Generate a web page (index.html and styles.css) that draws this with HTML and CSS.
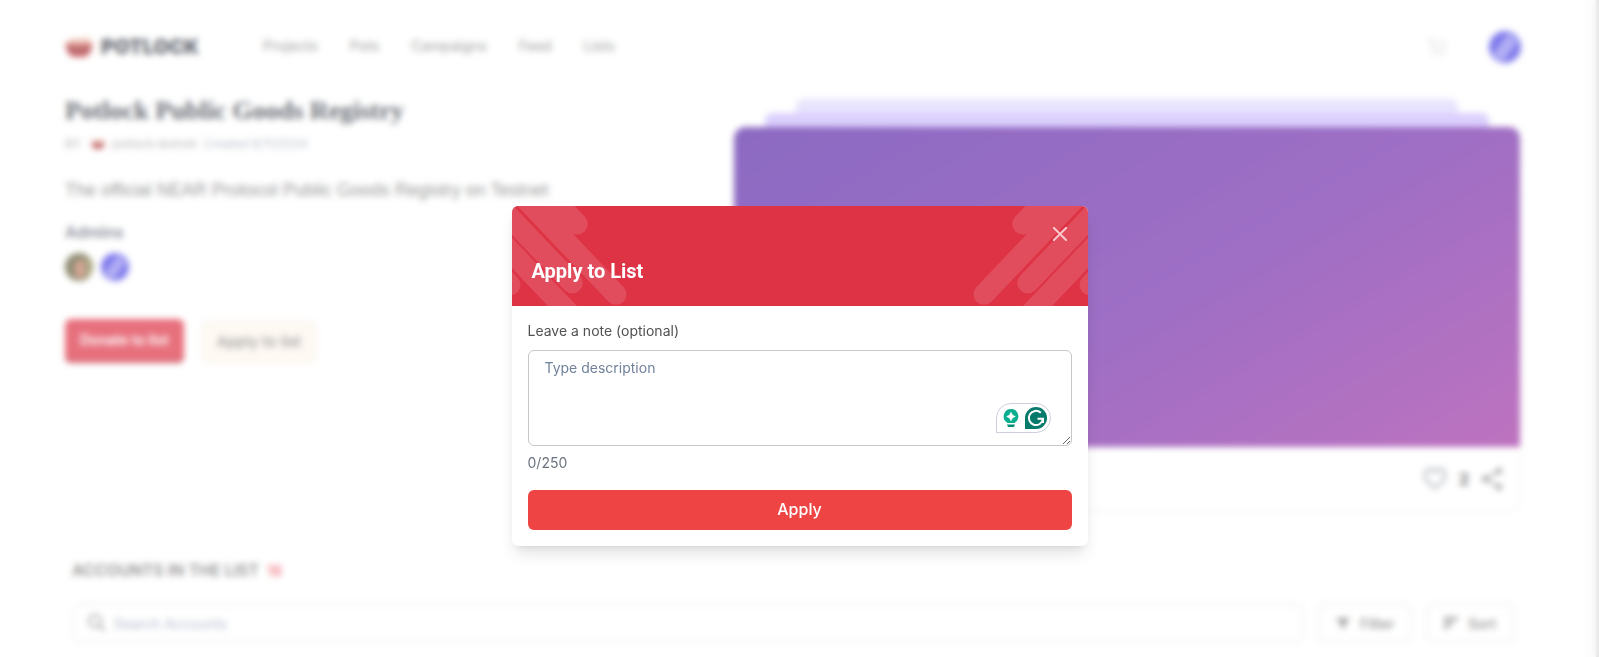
FILE: index.html
```html
<!DOCTYPE html>
<html lang="en">
<head>
<meta charset="utf-8">
<title>Potlock Public Goods Registry</title>
<link rel="stylesheet" href="styles.css">
</head>
<body>
<svg class="defs" aria-hidden="true">
  <symbol id="pot" viewBox="0 0 28 24">
    <path d="M21 5 24 0" stroke="#e8c9a8" stroke-width="2"/>
    <ellipse cx="14" cy="8" rx="13" ry="4" fill="#e2a08c"/>
    <path d="M1 8c2 3 24 3 26 0 1 8-4 14-9 14h-8C5 22 0 16 1 8z" fill="#b8242c"/>
    <path d="M4 12c4 2 16 2 20 0v3c-5 2-15 2-20 0z" fill="#7c3a36"/>
  </symbol>
  <symbol id="near" viewBox="0 0 32 32">
    <circle cx="16" cy="16" r="16" fill="#4a43e4"/>
    <path d="M6 26 22 4M11 29 27 8" stroke="#b4b0f6" stroke-width="4"/>
  </symbol>
</svg>
<div class="shell">
  <div class="page">
    <header class="topbar">
      <a class="brand" href="#"><svg class="brand-icon" aria-hidden="true"><use href="#pot"/></svg>POTLOCK</a>
      <nav class="nav">
        <a href="#">Projects</a><a href="#">Pots</a><a href="#">Campaigns</a><a href="#">Feed</a><a href="#">Lists</a>
      </nav>
      <button class="plain cart" aria-label="Cart"><svg width="20" height="20" viewBox="0 0 20 20" fill="none" stroke="#dedede" stroke-width="2"><path d="M1 2h3l2 11h10l2-8H5"/><circle cx="7" cy="17" r="1"/><circle cx="15" cy="17" r="1"/></svg></button>
      <button class="plain" aria-label="Account"><svg width="32" height="32"><use href="#near"/></svg></button>
    </header>
    <main>
      <section class="hero">
        <div class="intro">
          <h1>Potlock Public Goods Registry</h1>
          <p class="byline"><span>BY</span><svg class="by-icon" aria-hidden="true"><use href="#pot"/></svg><a href="#">potlock.testnet</a><span class="created">Created 6/11/2024</span></p>
          <p class="summary">The official NEAR Protocol Public Goods Registry on Testnet</p>
          <h2>Admins</h2>
          <div class="admins">
            <svg width="28" height="28" viewBox="0 0 28 28" aria-hidden="true"><circle cx="14" cy="14" r="14" fill="#5c5a34"/><ellipse cx="15" cy="16" rx="6" ry="10" fill="#c08068"/><path d="M21 6c5 4 5 12 1 17" stroke="#a3a05c" stroke-width="3" fill="none"/></svg>
            <svg width="28" height="28" aria-hidden="true"><use href="#near"/></svg>
          </div>
          <div class="actions">
            <button class="donate">Donate to list</button>
            <button class="apply-list">Apply to list</button>
          </div>
        </div>
        <div class="stack">
          <div class="sheet sheet-back"></div>
          <div class="sheet sheet-mid"></div>
          <div class="card">
            <div class="cover"></div>
            <div class="card-foot">
              <button class="plain" aria-label="Like"><svg width="24" height="24" viewBox="0 0 24 24" fill="none" stroke="#7f8791" stroke-width="2"><path d="M12 21C6 17 2 13 2 8.500A5 5 0 0 1 12 6a5 5 0 0 1 10 2.500C22 13 18 17 12 21z"/></svg></button>
              <span class="likes">2</span>
              <button class="plain" aria-label="Share"><svg width="22" height="24" viewBox="0 0 22 24" fill="#777" stroke="#777" stroke-width="2"><path d="M18 4 4 12l14 8" fill="none"/><circle cx="18" cy="4" r="2"/><circle cx="4" cy="12" r="2"/><circle cx="18" cy="20" r="2"/></svg></button>
            </div>
          </div>
        </div>
      </section>
      <section class="accounts">
        <h3>ACCOUNTS IN THE LIST <span>18</span></h3>
        <div class="tools">
          <label class="search"><svg width="18" height="18" viewBox="0 0 18 18" fill="none" stroke="#858585" stroke-width="2"><circle cx="7" cy="7" r="6"/><path d="m11 11 6 6"/></svg><input type="search" placeholder="Search Accounts" aria-label="Search Accounts"></label>
          <button class="tool"><svg width="14" height="12" viewBox="0 0 14 12" fill="#777"><path d="M0 1h14L9 7v4H5V7z"/></svg>Filter</button>
          <button class="tool"><svg width="14" height="12" viewBox="0 0 14 12" fill="#777"><path d="M0 0h14v3H0zM0 5h9v3H0zM0 9h4v3H0z"/></svg>Sort</button>
        </div>
      </section>
    </main>
  </div>
  <div class="track"></div>
</div>

<div class="overlay">
  <form class="modal" role="dialog" aria-labelledby="modal-title">
    <div class="modal-head">
      <svg class="stripes stripes-left" width="120" height="100" viewBox="0 0 120 100" aria-hidden="true"><path d="M65.300 18-29.800-82M104 88.300-38-61M60.300 77-72-62M98 150-60-16M-2 79-60 18"/></svg>
      <svg class="stripes stripes-right" width="120" height="100" viewBox="0 0 120 100" aria-hidden="true"><path transform="matrix(-1 0 0 1 120 0)" d="M65.300 18-29.800-82M104 88.300-38-61M60.300 77-72-62M98 150-60-16M-2 79-60 18"/></svg>
      <button type="button" class="plain close" aria-label="Close"><svg width="14" height="14" viewBox="0 0 14 14" fill="none" stroke="#f9c8cd" stroke-width="2"><path d="m0 0 14 14M14 0 0 14"/></svg></button>
      <h2 id="modal-title">Apply to List</h2>
    </div>
    <div class="modal-body">
      <label for="note">Leave a note (optional)</label>
      <div class="field">
        <textarea id="note" maxlength="250" placeholder="Type description"></textarea>
        <div class="assist">
          <svg width="16" height="20" viewBox="0 0 16 20" aria-hidden="true"><path d="M8 1a7.300 7.300 0 0 0-4 13.400V15h8v-.6A7.300 7.300 0 0 0 8 1z" fill="#09ad8f"/><path d="M4 16.500h8l-1 2.500H5z" fill="#078c76"/><path d="M8 4.200 9.400 7.100 12.300 8.500 9.400 9.900 8 12.800 6.600 9.900 3.700 8.500 6.600 7.100z" fill="#fff" stroke="#fff" stroke-width=".6"/></svg>
          <svg width="22" height="22" viewBox="0 0 22 22" aria-hidden="true"><path d="M0 11a11 11 0 1 1 11 11H0z" fill="#067a6b"/><path d="M15.800 5.800A7.100 7.100 0 1 0 18 11.800H12.500M18 11.500V16" fill="none" stroke="#fff" stroke-width="2"/></svg>
        </div>
      </div>
      <p class="count">0/250</p>
      <button type="submit" class="submit">Apply</button>
    </div>
  </form>
</div>
</body>
</html>
```
FILE: styles.css
```css
* { box-sizing: border-box; }
body { margin: 0; font-family: Inter, "Liberation Sans", sans-serif; color: #292929; background: #fff; }
h1, h2, h3, p { margin: 0; }
a { color: inherit; text-decoration: none; }
button, input, textarea { font: inherit; }
svg { display: block; flex: none; }
.defs { position: absolute; width: 0; height: 0; }
.plain { padding: 0; border: 0; background: none; }

.shell { display: grid; grid-template-columns: 1fr 13px; height: 100vh; overflow: hidden; }
.track { background: #fcfcfc; border-right: 3px solid #d8d8d8; }
.page { padding: 0 65px; }

.topbar { display: flex; align-items: center; height: 94px; }
.brand { display: flex; align-items: center; gap: 8px; font-size: 20px; font-weight: 900; color: #292f3a; }
.brand-icon { width: 28px; height: 24px; }
.nav { display: flex; gap: 32px; margin-left: 64px; margin-right: auto; padding-bottom: 3px; font-size: 14px; font-weight: 500; color: #8a8a8a; }
.cart { margin-right: 42px; }

.hero { display: grid; grid-template-columns: 654fr 788fr; gap: 14px; min-height: 416px; }
h1 { font: 700 26px/34px "Liberation Serif", serif; color: #292f3a; }
.byline { display: flex; align-items: center; gap: 10px; margin-top: 8px; font-size: 12px; line-height: 16px; color: #999; }
.by-icon { width: 14px; height: 12px; }
.byline a { margin: 0 -3px; }
.created { color: #a0a9b8; }
.summary { margin-top: 24px; font: 18px/28px "Liberation Sans", sans-serif; color: #707070; }
.intro h2 { margin-top: 16px; font-size: 16px; line-height: 24px; font-weight: 600; color: #5b6270; }
.admins { display: flex; gap: 8px; margin-top: 9px; }
.actions { display: flex; align-items: flex-end; gap: 18px; margin-top: 38px; font-size: 14px; font-weight: 600; }
.donate { height: 44px; padding: 0 15px 4px; border: 0; border-radius: 6px; background: #dd3345; color: #fff; box-shadow: inset 0 -2px #b02a3a; }
.apply-list { height: 42px; padding: 0 14px 2px; border: 1px solid #f5e9da; border-radius: 6px; background: #fef6ee; color: #777; font-size: 15px; font-weight: 500; }

.stack { display: flex; flex-direction: column; align-items: center; padding-top: 5px; }
.sheet { height: 14px; border-radius: 8px 8px 0 0; }
.sheet-back { width: 84%; background: #dfd8fd; }
.sheet-mid { width: 92%; background: #ccbcfc; }
.card { width: 100%; border: 1px solid #eee; border-top: 0; border-radius: 12px; overflow: hidden; }
.cover { height: 320px; background: linear-gradient(150deg, #5b2aa8, #7531ac 55%, #a136a4); }
.card-foot { display: flex; align-items: center; justify-content: flex-end; gap: 12px; height: 63px; padding: 0 17px; }
.likes { font-size: 16px; font-weight: 700; color: #444; }

.accounts { padding: 47px 7px 0; }
.accounts h3 { font-size: 16px; line-height: 24px; font-weight: 600; color: #666; }
.accounts h3 span { margin-left: 4px; font-size: 14px; color: #ee5565; }
.tools { display: flex; gap: 14px; margin-top: 20px; }
.search { display: flex; flex: 1; align-items: center; gap: 8px; height: 40px; padding: 0 14px; border: 2px solid #eee; border-radius: 8px; }
.search input { flex: 1; padding: 0; border: 0; background: none; font-size: 14px; }
.search input::placeholder { color: #94a3b8; }
.tool { display: flex; align-items: center; gap: 10px; height: 40px; padding: 0 16px; border: 2px solid #eee; border-radius: 8px; background: none; color: #666; font-size: 14px; font-weight: 500; }

.overlay { position: fixed; inset: 0; display: flex; align-items: flex-start; justify-content: center; padding-top: 206px; background: rgba(255, 255, 255, .3); backdrop-filter: blur(3px); }
.modal { width: 576px; border-radius: 6px; background: #fff; box-shadow: 0 10px 15px -3px rgba(0, 0, 0, .12), 0 4px 6px -4px rgba(0, 0, 0, .1); }
.modal-head { position: relative; display: flex; flex-direction: column; justify-content: flex-end; height: 100px; padding: 21px 20px; overflow: hidden; border-radius: 6px 6px 0 0; background: #dd3345; color: #fff; }
.modal-head h2 { position: relative; font: 700 20px/28px Roboto, sans-serif; }
.stripes { position: absolute; top: 0; fill: none; stroke: #fff; stroke-opacity: .13; stroke-width: 21px; stroke-linecap: round; }
.stripes-left { left: 0; }
.stripes-right { right: 0; }
.close { position: absolute; top: 21px; right: 21px; }
.modal-body { display: flex; flex-direction: column; padding: 15px 16px 16px; }
.modal-body label { font-size: 14px; line-height: 20px; color: #525252; }
.field { position: relative; margin-top: 9px; }
textarea { display: block; width: 100%; height: 96px; padding: 7px 16px; border: 1px solid #c7c7c7; border-radius: 6px; background: #fff; font-size: 14px; line-height: 20px; resize: vertical; }
textarea::placeholder { color: #71829b; }
.assist { position: absolute; right: 21px; bottom: 13px; display: flex; align-items: center; gap: 6px; width: 55px; height: 30px; padding-left: 6px; border: 1px solid #cdd0dc; border-radius: 15px 15px 15px 0; background: #fff; }
.count { margin-top: 7px; font-size: 14px; line-height: 20px; color: #6b7280; }
.submit { height: 40px; margin-top: 17px; padding: 0 0 2px; border: 0; border-radius: 6px; background: #ef4444; color: #fff; font-size: 16px; font-weight: 500; }
```
